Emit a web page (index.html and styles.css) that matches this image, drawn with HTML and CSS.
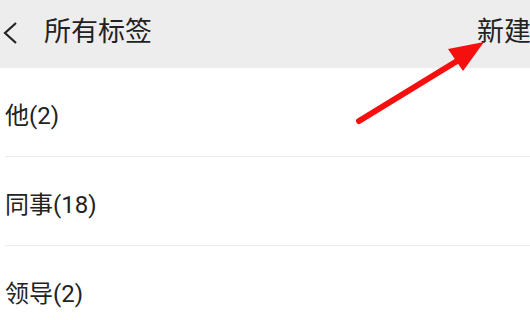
FILE: index.html
```html
<html>
    <head>
        <link rel="stylesheet" href="styles.css">
    </head>
    <body>
        <div class="topBar">
            <div class="topLeft">
                <svg class="back" width="16" height="24" viewBox="0 0 16 24">
                    <polyline points="14,2 3,12 14,22" fill="none" stroke="#222" stroke-width="2.2"/>
                </svg>
                <span class="title">所有标签</span>
            </div>
            <span class="newBtn">新建</span>
        </div>
        <div class="list">
            <div class="row">他(2)</div>
            <div class="row">同事(18)</div>
            <div class="row">领导(2)</div>
        </div>
        <!-- red hint arrow drawn over the page -->
        <svg class="hint" width="530" height="320" viewBox="0 0 530 320">
            <line x1="359" y1="121" x2="462" y2="58" stroke="#f50f0f" stroke-width="6" stroke-linecap="round"/>
            <polygon points="484,42 448,49 463,71" fill="#f50f0f"/>
        </svg>
    </body>
</html>
```

FILE: styles.css
```css
body{
    margin: 0;
    background-color: #fff;
    font-family: Roboto, "Noto Sans CJK SC", sans-serif;
    color: #222;
    overflow: hidden;
}
.topBar{
    display: flex;
    align-items: center;
    justify-content: space-between;
    height: 68px;
    background-color: #ededed;
}
.topLeft{
    display: flex;
    align-items: center;
}
.back{
    margin-left: 2px;
    margin-bottom: 2px;
}
.title{
    margin-left: 26px;
    font-size: 27px;
    line-height: 30px;
    margin-bottom: 4px;
}
.newBtn{
    font-size: 27px;
    line-height: 30px;
    margin-bottom: 4px;
    margin-right: -1px;
}
.list{
    padding-left: 5px;
}
.row{
    display: flex;
    align-items: center;
    height: 89px;
    padding-top: 2px;
    box-sizing: border-box;
    border-bottom: 1px solid #ebebeb;
    font-size: 24px;
}
.hint{
    position: absolute;
    left: 0;
    top: 0;
}
```
